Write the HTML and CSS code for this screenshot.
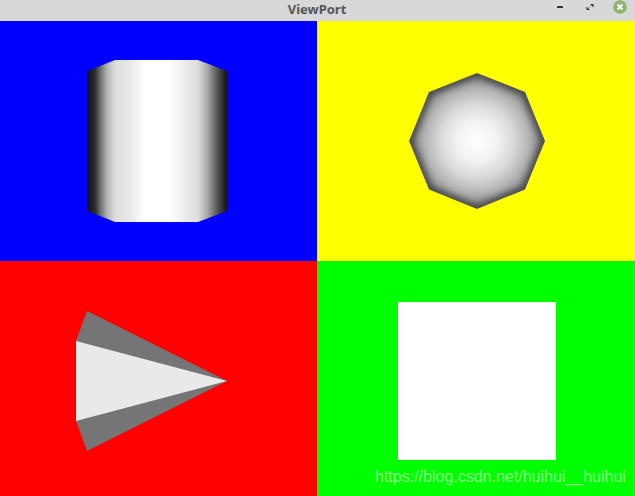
FILE: index.html
```html
<!DOCTYPE html>
<html lang="en">
<head>
<meta charset="utf-8">
<title>ViewPort</title>
<link rel="stylesheet" href="styles.css">
</head>
<body>
<div class="window">
  <header class="titlebar">
    <span class="title">ViewPort</span>
    <div class="controls">
      <svg class="ctl" width="8" height="14" viewBox="0 0 8 14"><rect x="1" y="6" width="6" height="2" fill="#333"/></svg>
      <svg class="ctl" width="8" height="14" viewBox="0 0 8 14"><path d="M4 4h3.5v3.5zM4 10H.5V6.5z" fill="#333"/><path d="M2.6 8.4l2.8-2.8" stroke="#999" stroke-width="1"/></svg>
      <svg class="ctl ctl-close" width="16" height="14" viewBox="0 0 16 14"><circle cx="8" cy="7" r="6.8" fill="#8db36f"/><path d="M5.5 4.5l5 5M10.5 4.5l-5 5" stroke="#fff" stroke-width="2"/></svg>
    </div>
  </header>
  <main class="views">
    <section class="view blue">
      <svg width="317" height="240" viewBox="0 21 317 240">
        <defs>
          <linearGradient id="cyl" gradientUnits="userSpaceOnUse" x1="87.5" y1="0" x2="227" y2="0">
            <stop offset="0" stop-color="#111"/>
            <stop offset=".054" stop-color="#2c2c2c"/>
            <stop offset=".09" stop-color="#6a6a6a"/>
            <stop offset=".14" stop-color="#b4b4b4"/>
            <stop offset=".197" stop-color="#dcdcdc"/>
            <stop offset=".30" stop-color="#e8e8e8"/>
            <stop offset=".41" stop-color="#fff"/>
            <stop offset=".59" stop-color="#fff"/>
            <stop offset=".79" stop-color="#ddd"/>
            <stop offset=".86" stop-color="#a8a8a8"/>
            <stop offset=".93" stop-color="#555"/>
            <stop offset="1" stop-color="#111"/>
          </linearGradient>
        </defs>
        <polygon fill="url(#cyl)" points="87.5,71 115,60 198,60 227,71 227,211 198,222 115,222 87.5,211"/>
      </svg>
    </section>
    <section class="view yellow">
      <svg width="318" height="240" viewBox="317 21 318 240">
        <defs>
          <radialGradient id="ball" gradientUnits="userSpaceOnUse" cx="477" cy="141" r="68">
            <stop offset="0" stop-color="#fff"/>
            <stop offset=".3" stop-color="#f2f2f2"/>
            <stop offset=".55" stop-color="#d8d8d8"/>
            <stop offset=".75" stop-color="#b6b6b6"/>
            <stop offset="1" stop-color="#808080"/>
          </radialGradient>
          <clipPath id="octa">
            <polygon points="477,73 525,92 545,141 525,189.5 477,209 429,189.5 409,141 429,92"/>
          </clipPath>
          <filter id="soft" x="-20%" y="-20%" width="140%" height="140%">
            <feGaussianBlur stdDeviation="3.5"/>
          </filter>
        </defs>
        <g clip-path="url(#octa)">
          <polygon fill="url(#ball)" points="477,73 525,92 545,141 525,189.5 477,209 429,189.5 409,141 429,92"/>
          <polygon fill="none" stroke="#3a3a3a" stroke-width="7" filter="url(#soft)" points="477,73 525,92 545,141 525,189.5 477,209 429,189.5 409,141 429,92"/>
        </g>
      </svg>
    </section>
    <section class="view red">
      <svg width="317" height="235" viewBox="0 261 317 235">
        <polygon fill="#757575" points="87,311 76,341 76,421 87,451 227,381"/>
        <polygon fill="#e9e9e9" points="76,341 227,381 76,421"/>
      </svg>
    </section>
    <section class="view green">
      <div class="square"></div>
    </section>
  </main>
  <span class="watermark">https://blog.csdn.net/huihui__huihui</span>
</div>
</body>
</html>
```

FILE: styles.css
```css
html, body {
  margin: 0;
  padding: 0;
  overflow: hidden;
}
.window {
  position: relative;
  width: 635px;
  height: 496px;
  display: flex;
  flex-direction: column;
}
.titlebar {
  position: relative;
  height: 21px;
  flex: none;
  background: #d8d8d8;
  display: flex;
  align-items: center;
  justify-content: center;
}
.title {
  font: bold 13px "Noto Sans", sans-serif;
  color: #555;
  line-height: 21px;
  margin-top: -3px;
  margin-right: 1px;
}
.controls {
  position: absolute;
  right: 7px;
  top: 0;
  display: flex;
  gap: 22px;
}
.ctl {
  display: block;
}
.ctl-close {
  margin-left: -4px;
}
.views {
  flex: 1;
  display: grid;
  grid-template-columns: 317px 318px;
  grid-template-rows: 240px 235px;
}
.view svg {
  display: block;
}
.blue { background: #00f; }
.yellow { background: #ff0; }
.red { background: #f00; }
.green {
  background: #0f0;
  display: flex;
  align-items: flex-start;
  padding: 41px 0 0 81px;
}
.square {
  width: 158px;
  height: 158px;
  background: #fff;
}
.watermark {
  position: absolute;
  left: 375px;
  top: 467px;
  font: 16px/20px "Liberation Sans", sans-serif;
  color: rgba(255, 255, 255, .55);
  white-space: nowrap;
}
```
